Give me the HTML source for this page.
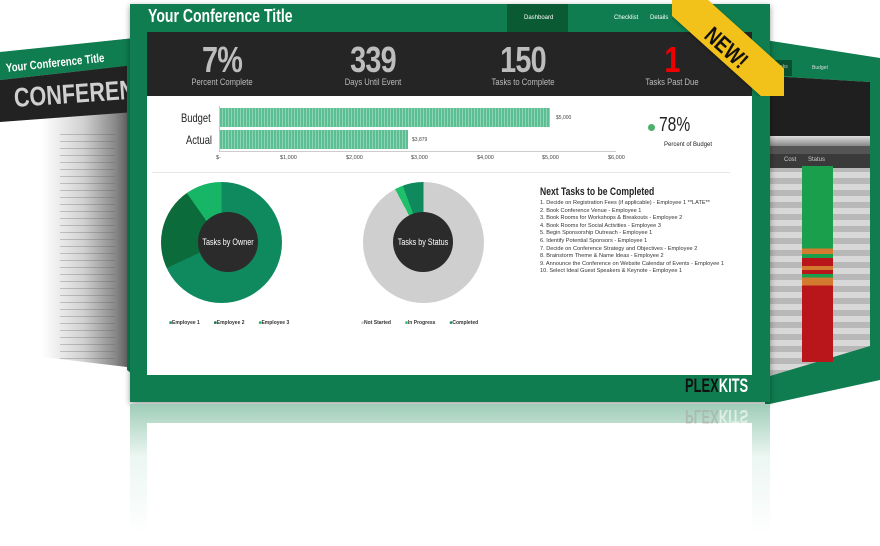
<!DOCTYPE html>
<html><head><meta charset="utf-8"><style>
*{margin:0;padding:0;box-sizing:border-box}
body{width:880px;height:546px;overflow:hidden;background:#fff;font-family:"Liberation Sans",sans-serif;position:relative}
.a{position:absolute}
.cl{transform:scaleX(.78);transform-origin:left center;white-space:nowrap}
.num{color:#bdbdbd;font-weight:bold;font-size:36px;text-align:center;width:120px;letter-spacing:-1px;transform:scaleX(.8)}
.lab{color:#bbb;font-size:9px;text-align:center;width:120px;transform:scaleX(.85)}
.tk{font-size:5.6px;color:#333;line-height:7.6px;white-space:nowrap}
.ax{font-size:5.5px;color:#444}
</style></head><body>
<!-- left panel -->
<div class="a" style="left:0;top:0;width:140px;height:380px;clip-path:polygon(0 52px,135px 38px,135px 368px,0 352px);background:linear-gradient(90deg,#fff 30%,#d0d0d0 60%,#8a8a8a 82%,#3a3a3a 100%)"></div>
<div class="a" style="left:0;top:0;width:140px;height:380px;clip-path:polygon(0 52px,135px 38px,135px 65px,0 80px);background:#0f7d4f"></div>
<div class="a" style="left:0;top:0;width:140px;height:380px;clip-path:polygon(0 80px,135px 65px,135px 112px,0 122px);background:#222"></div>
<div class="a cl" style="left:6px;top:61px;color:#fff;font-weight:bold;font-size:12px;transform:rotate(-6deg) scaleX(.8)">Your Conference Title</div>
<div class="a cl" style="left:14px;top:83px;color:#d0d0d0;font-weight:bold;font-size:27px;transform:rotate(-4deg) scaleX(.8)">CONFERENCE</div>
<div class="a" style="left:60px;top:130px;width:55px;height:230px;background:repeating-linear-gradient(180deg,transparent 0 4px,rgba(90,90,90,.3) 4px 5px,transparent 5px 7px)"></div>
<div class="a" style="left:0;top:0;width:140px;height:380px;clip-path:polygon(127px 40px,140px 38px,140px 380px,127px 370px);background:#0f7d4f"></div>
<!-- right panel -->
<div class="a" style="left:765px;top:0;width:115px;height:420px;clip-path:polygon(0 40px,115px 58px,115px 380px,0 405px);background:#0f7d4f"></div>
<div class="a" style="left:770px;top:60px;width:22px;height:16px;background:#0a4f2e"></div>
<div class="a" style="left:775px;top:64px;font-size:5px;color:#ccc">Tasks</div>
<div class="a" style="left:812px;top:65px;font-size:5px;color:#ddd">Budget</div>
<div class="a" style="left:770px;top:76px;width:100px;height:300px;clip-path:polygon(0 0,100% 6px,100% 270px,0 300px);background:repeating-linear-gradient(180deg,#d8d8d8 0 6px,#b8b8b8 6px 12px)"></div>
<div class="a" style="left:770px;top:76px;width:100px;height:60px;clip-path:polygon(0 0,100% 6px,100% 60px,0 60px);background:#1f1f1f"></div>
<div class="a" style="left:770px;top:136px;width:100px;height:10px;background:linear-gradient(#ddd,#888)"></div>
<div class="a" style="left:770px;top:146px;width:100px;height:8px;background:#555"></div>
<div class="a" style="left:770px;top:154px;width:100px;height:14px;background:#3a3a3a"></div>
<div class="a" style="left:802px;top:166px;width:31px;height:196px;background:linear-gradient(#1aa04c 0 42%,#d47a30 42% 45%,#1aa04c 45% 47%,#b8161a 47% 51%,#d47a30 51% 53%,#b8161a 53% 55%,#1aa04c 55% 57%,#d47a30 57% 61%,#b8161a 61% 100%)"></div>
<div class="a" style="left:808px;top:157px;font-size:6px;color:#ccc">Status</div>
<div class="a" style="left:784px;top:157px;font-size:6px;color:#ccc">Cost</div>
<!-- main panel -->
<div class="a" style="left:130px;top:4px;width:640px;height:398px;background:#0f7d4f;box-shadow:0 2px 6px rgba(0,0,0,.4)"></div>
<div class="a cl" style="left:148px;top:6px;color:#fff;font-weight:bold;font-size:18px;transform:scaleX(.78)">Your Conference Title</div>
<div class="a" style="left:507px;top:4px;width:61px;height:28px;background:#0a5a33"></div>
<div class="a" style="left:524px;top:15px;font-size:6px;color:#fff">Dashboard</div>
<div class="a" style="left:614px;top:15px;font-size:6px;color:#fff">Checklist</div>
<div class="a" style="left:650px;top:15px;font-size:6px;color:#fff">Details</div>
<div class="a" style="left:147px;top:32px;width:605px;height:64px;background:#252525"></div>
<div class="a num" style="left:162px;top:39px">7%</div><div class="a lab" style="left:162px;top:77px">Percent Complete</div>
<div class="a num" style="left:313px;top:39px">339</div><div class="a lab" style="left:313px;top:77px">Days Until Event</div>
<div class="a num" style="left:463px;top:39px">150</div><div class="a lab" style="left:463px;top:77px">Tasks to Complete</div>
<div class="a num" style="left:612px;top:39px;color:#e00">1</div><div class="a lab" style="left:612px;top:77px">Tasks Past Due</div>
<div class="a" style="left:147px;top:96px;width:605px;height:279px;background:#fff"></div>
<div class="a cl" style="left:181px;top:111px;font-size:12px;color:#222">Budget</div>
<div class="a cl" style="left:186px;top:133px;font-size:12px;color:#222">Actual</div>
<div class="a" style="left:219px;top:106px;width:1px;height:45px;background:#ccc"></div>
<div class="a" style="left:219px;top:151px;width:397px;height:1px;background:#ccc"></div>
<div class="a" style="left:220px;top:108px;width:330px;height:19px;background:repeating-linear-gradient(90deg,#5cbf94 0 2px,#8fd4b4 2px 3px)"></div>
<div class="a" style="left:220px;top:130px;width:188px;height:19px;background:repeating-linear-gradient(90deg,#5cbf94 0 2px,#8fd4b4 2px 3px)"></div>
<div class="a ax" style="left:556px;top:115px;font-size:5px">$5,000</div>
<div class="a ax" style="left:412px;top:137px;font-size:5px">$3,879</div>
<div class="a ax" style="left:216px;top:155px">$-</div>
<div class="a ax" style="left:280px;top:155px">$1,000</div>
<div class="a ax" style="left:346px;top:155px">$2,000</div>
<div class="a ax" style="left:411px;top:155px">$3,000</div>
<div class="a ax" style="left:477px;top:155px">$4,000</div>
<div class="a ax" style="left:542px;top:155px">$5,000</div>
<div class="a ax" style="left:608px;top:155px">$6,000</div>
<div class="a" style="left:648px;top:124px;width:7px;height:7px;border-radius:50%;background:#4caf6a"></div>
<div class="a cl" style="left:659px;top:114px;font-size:20px;color:#222">78%</div>
<div class="a" style="left:664px;top:142px;font-size:6px;color:#222">Percent of Budget</div>
<div class="a" style="left:152px;top:172px;width:578px;height:1px;background:#e6e6e6"></div>
<div class="a" style="left:161px;top:182px;width:121px;height:121px;border-radius:50%;background:conic-gradient(#0f8a5f 0 245deg,#0b6b3a 245deg 325deg,#17b566 325deg 360deg)"></div>
<div class="a" style="left:198px;top:212px;width:60px;height:60px;border-radius:50%;background:#2b2b2b"></div>
<div class="a" style="left:188px;top:237px;width:80px;text-align:center;font-size:9px;color:#fff;transform:scaleX(.8);white-space:nowrap">Tasks by Owner</div>
<div class="a" style="left:363px;top:182px;width:121px;height:121px;border-radius:50%;background:conic-gradient(#cfcfcf 0 332deg,#1ec06a 332deg 340deg,#0f8a5f 340deg 360deg)"></div>
<div class="a" style="left:393px;top:212px;width:60px;height:60px;border-radius:50%;background:#2b2b2b"></div>
<div class="a" style="left:383px;top:237px;width:80px;text-align:center;font-size:9px;color:#fff;transform:scaleX(.8);white-space:nowrap">Tasks by Status</div>
<div class="a" style="left:169px;top:320px;font-size:5px;color:#333;font-weight:bold"><span style="color:#0f8a5f">■</span>Employee 1 &nbsp;&nbsp;&nbsp;&nbsp;&nbsp;&nbsp;&nbsp;&nbsp;&nbsp;<span style="color:#0b6b3a">■</span>Employee 2 &nbsp;&nbsp;&nbsp;&nbsp;&nbsp;&nbsp;&nbsp;&nbsp;&nbsp;<span style="color:#17b566">■</span>Employee 3</div>
<div class="a" style="left:361px;top:320px;font-size:5px;color:#333;font-weight:bold"><span style="color:#ccc">■</span>Not Started &nbsp;&nbsp;&nbsp;&nbsp;&nbsp;&nbsp;&nbsp;&nbsp;&nbsp;<span style="color:#1ec06a">■</span>In Progress &nbsp;&nbsp;&nbsp;&nbsp;&nbsp;&nbsp;&nbsp;&nbsp;&nbsp;<span style="color:#0f8a5f">■</span>Completed</div>
<div class="a cl" style="left:540px;top:186px;font-size:11px;font-weight:bold;color:#222">Next Tasks to be Completed</div>
<div class="a tk" style="left:540px;top:200px">
1. Decide on Registration Fees (if applicable) - Employee 1 **LATE**<br>
2. Book Conference Venue - Employee 1<br>
3. Book Rooms for Workshops &amp; Breakouts - Employee 2<br>
4. Book Rooms for Social Activities - Employee 3<br>
5. Begin Sponsorship Outreach - Employee 1<br>
6. Identify Potential Sponsors - Employee 1<br>
7. Decide on Conference Strategy and Objectives - Employee 2<br>
8. Brainstorm Theme &amp; Name Ideas - Employee 2<br>
9. Announce the Conference on Website Calendar of Events - Employee 1<br>
10. Select Ideal Guest Speakers &amp; Keynote - Employee 1</div>
<div class="a cl" style="left:685px;top:376px;font-size:19px;font-weight:bold;color:#111;transform:scaleX(.68)">PLEX<span style="color:#fff">KITS</span></div>
<!-- NEW ribbon -->
<div class="a" style="left:672px;top:0;width:112px;height:96px;overflow:hidden">
<div class="a" style="left:16px;top:-18px;width:170px;height:36px;background:#f2c21a;transform:rotate(42deg);transform-origin:0 0;box-shadow:0 1px 3px rgba(0,0,0,.3)"></div>
<div class="a" style="left:36px;top:18px;font-weight:bold;font-size:23px;color:#111;transform:rotate(42deg) scaleX(.8);transform-origin:left">NEW!</div>
</div>
<!-- reflection -->
<div class="a" style="left:130px;top:404px;width:640px;height:130px;background:linear-gradient(#9fcdb8,rgba(190,225,210,.3) 40%,rgba(255,255,255,0))"></div>
<div class="a" style="left:147px;top:423px;width:605px;height:120px;background:#fff"></div>
<div class="a cl" style="left:685px;top:404px;font-size:19px;font-weight:bold;color:#aaa;transform:scaleX(.68) scaleY(-1);opacity:.6">PLEX<span style="color:#fff">KITS</span></div>
</body></html>
